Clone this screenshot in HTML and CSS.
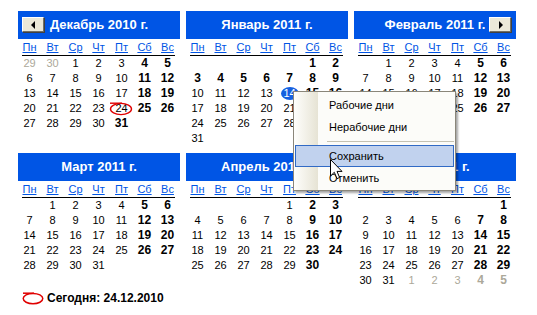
FILE: index.html
```html
<!DOCTYPE html>
<html lang="ru">
<head>
<meta charset="utf-8">
<title>Календарь</title>
<link rel="stylesheet" href="styles.css">
</head>
<body>
<div class="page">
  <div class="months">
    <section class="cal">
      <header class="cal-head"><span class="nav prev"><i></i></span><span class="title">Декабрь 2010 г.</span></header>
      <div class="dow"><span>Пн</span><span>Вт</span><span>Ср</span><span>Чт</span><span>Пт</span><span>Сб</span><span>Вс</span></div>
      <div class="rule"></div>
      <div class="days">
        <span class="g">29</span><span class="g">30</span><span>1</span><span>2</span><span>3</span><span class="b">4</span><span class="b">5</span>
        <span>6</span><span>7</span><span>8</span><span>9</span><span>10</span><span class="b">11</span><span class="b">12</span>
        <span>13</span><span>14</span><span>15</span><span>16</span><span>17</span><span class="b">18</span><span class="b">19</span>
        <span>20</span><span>21</span><span>22</span><span>23</span><span class="today">24<svg class="ring" width="24" height="15" viewBox="0 0 24 15"><path d="M1 2.2 H13" /><ellipse cx="12" cy="8" rx="10.5" ry="5.6"/></svg></span><span class="b">25</span><span class="b">26</span>
        <span>27</span><span>28</span><span>29</span><span>30</span><span class="b">31</span>
      </div>
    </section>
    <section class="cal">
      <header class="cal-head"><span class="title">Январь 2011 г.</span></header>
      <div class="dow"><span>Пн</span><span>Вт</span><span>Ср</span><span>Чт</span><span>Пт</span><span>Сб</span><span>Вс</span></div>
      <div class="rule"></div>
      <div class="days">
        <span></span><span></span><span></span><span></span><span></span><span class="b">1</span><span class="b">2</span>
        <span class="b">3</span><span class="b">4</span><span class="b">5</span><span class="b">6</span><span class="b">7</span><span class="b">8</span><span class="b">9</span>
        <span>10</span><span>11</span><span>12</span><span>13</span><span class="sel"><em>14</em></span><span class="b">15</span><span class="b">16</span>
        <span>17</span><span>18</span><span>19</span><span>20</span><span>21</span><span class="b">22</span><span class="b">23</span>
        <span>24</span><span>25</span><span>26</span><span>27</span><span>28</span><span class="b">29</span><span class="b">30</span>
        <span>31</span>
      </div>
    </section>
    <section class="cal">
      <header class="cal-head"><span class="title">Февраль 2011 г.</span><span class="nav next"><i></i></span></header>
      <div class="dow"><span>Пн</span><span>Вт</span><span>Ср</span><span>Чт</span><span>Пт</span><span>Сб</span><span>Вс</span></div>
      <div class="rule"></div>
      <div class="days">
        <span></span><span>1</span><span>2</span><span>3</span><span>4</span><span class="b">5</span><span class="b">6</span>
        <span>7</span><span>8</span><span>9</span><span>10</span><span>11</span><span class="b">12</span><span class="b">13</span>
        <span>14</span><span>15</span><span>16</span><span>17</span><span>18</span><span class="b">19</span><span class="b">20</span>
        <span>21</span><span>22</span><span class="b">23</span><span>24</span><span>25</span><span class="b">26</span><span class="b">27</span>
        <span>28</span>
      </div>
    </section>
    <section class="cal">
      <header class="cal-head"><span class="title">Март 2011 г.</span></header>
      <div class="dow"><span>Пн</span><span>Вт</span><span>Ср</span><span>Чт</span><span>Пт</span><span>Сб</span><span>Вс</span></div>
      <div class="rule"></div>
      <div class="days">
        <span></span><span>1</span><span>2</span><span>3</span><span>4</span><span class="b">5</span><span class="b">6</span>
        <span>7</span><span>8</span><span>9</span><span>10</span><span>11</span><span class="b">12</span><span class="b">13</span>
        <span>14</span><span>15</span><span>16</span><span>17</span><span>18</span><span class="b">19</span><span class="b">20</span>
        <span>21</span><span>22</span><span>23</span><span>24</span><span>25</span><span class="b">26</span><span class="b">27</span>
        <span>28</span><span>29</span><span>30</span><span>31</span>
      </div>
    </section>
    <section class="cal">
      <header class="cal-head"><span class="title">Апрель 2011 г.</span></header>
      <div class="dow"><span>Пн</span><span>Вт</span><span>Ср</span><span>Чт</span><span>Пт</span><span>Сб</span><span>Вс</span></div>
      <div class="rule"></div>
      <div class="days">
        <span></span><span></span><span></span><span></span><span>1</span><span class="b">2</span><span class="b">3</span>
        <span>4</span><span>5</span><span>6</span><span>7</span><span>8</span><span class="b">9</span><span class="b">10</span>
        <span>11</span><span>12</span><span>13</span><span>14</span><span>15</span><span class="b">16</span><span class="b">17</span>
        <span>18</span><span>19</span><span>20</span><span>21</span><span>22</span><span class="b">23</span><span class="b">24</span>
        <span>25</span><span>26</span><span>27</span><span>28</span><span>29</span><span class="b">30</span>
      </div>
    </section>
    <section class="cal">
      <header class="cal-head"><span class="title">Май 2011 г.</span></header>
      <div class="dow"><span>Пн</span><span>Вт</span><span>Ср</span><span>Чт</span><span>Пт</span><span>Сб</span><span>Вс</span></div>
      <div class="rule"></div>
      <div class="days">
        <span></span><span></span><span></span><span></span><span></span><span></span><span class="b">1</span>
        <span>2</span><span>3</span><span>4</span><span>5</span><span>6</span><span class="b">7</span><span class="b">8</span>
        <span>9</span><span>10</span><span>11</span><span>12</span><span>13</span><span class="b">14</span><span class="b">15</span>
        <span>16</span><span>17</span><span>18</span><span>19</span><span>20</span><span class="b">21</span><span class="b">22</span>
        <span>23</span><span>24</span><span>25</span><span>26</span><span>27</span><span class="b">28</span><span class="b">29</span>
        <span>30</span><span>31</span><span class="g">1</span><span class="g">2</span><span class="g">3</span><span class="g b">4</span><span class="g b">5</span>
      </div>
    </section>
  </div>
  <div class="today-line">
    <svg class="today-icon" width="22" height="14" viewBox="0 0 22 14"><path d="M1 2.2 H12" /><ellipse cx="11" cy="7.6" rx="9.8" ry="5.2"/></svg>
    <span>Сегодня: 24.12.2010</span>
  </div>

  <div class="menu">
    <div class="item">Рабочие дни</div>
    <div class="item">Нерабочие дни</div>
    <div class="sep"></div>
    <div class="item hot">Сохранить</div>
    <div class="item">Отменить</div>
  </div>
  <svg class="cursor" width="13" height="21" viewBox="0 0 13 21"><path d="M0.5 0.5 V17 L4.3 13.3 L7 19.6 L9.6 18.5 L7 12.4 H12 Z" fill="#fff" stroke="#000" stroke-width="1" stroke-linejoin="miter"/></svg>
</div>
</body>
</html>
```
FILE: styles.css
```css
html, body {
  margin: 0;
  padding: 0;
  background: #fff;
}

.page {
  position: relative;
  width: 537px;
  height: 315px;
  padding: 11px 0 0 18px;
  box-sizing: border-box;
  font-family: "Liberation Sans", Arial, sans-serif;
  color: #000;
}

.months {
  display: grid;
  grid-template-columns: repeat(3, 162px);
  column-gap: 6px;
  row-gap: 7px;
}

.cal {
  width: 162px;
}

.cal-head {
  position: relative;
  height: 28px;
  background: #0055e5;
  display: flex;
  align-items: center;
  justify-content: center;
}

.title {
  color: #fff;
  font-weight: bold;
  font-size: 13px;
  line-height: 28px;
}

.nav {
  position: absolute;
  top: 6px;
  width: 22px;
  height: 15px;
  box-sizing: border-box;
  background: #ece9d8;
  border-top: 1px solid #fff;
  border-left: 1px solid #fff;
  border-right: 1px solid #716f64;
  border-bottom: 1px solid #716f64;
  box-shadow: 1px 1px 0 #404040;
  display: flex;
  align-items: center;
  justify-content: center;
}

.nav.prev { left: 4px; }
.nav.next { right: 5px; }

.nav i {
  display: block;
  width: 0;
  height: 0;
  border-top: 4px solid transparent;
  border-bottom: 4px solid transparent;
}

.prev i { border-right: 4px solid #000; margin-left: -1px; }
.next i { border-left: 4px solid #000; margin-left: 1px; }

.dow {
  display: grid;
  grid-template-columns: repeat(7, 23px);
  height: 16px;
  line-height: 17px;
  font-size: 11px;
  color: #0055e5;
  text-align: center;
}

.dow span {
  text-decoration: underline;
  text-underline-offset: 1px;
}

.rule {
  height: 1px;
  background: #000;
  margin: 0 5px 0 4px;
}

.days {
  display: grid;
  grid-template-columns: repeat(7, 23px);
  grid-template-rows: repeat(6, 15px);
  font-size: 11px;
  line-height: 15px;
  text-align: center;
}

.days span {
  position: relative;
}

.days .b {
  font-weight: bold;
  font-size: 12px;
}

.days .g {
  color: #aca899;
}

.days .sel em {
  display: inline-block;
  font-style: normal;
  width: 18px;
  height: 13px;
  line-height: 13px;
  margin-top: 1px;
  border-radius: 50%;
  background: #1560e0;
  color: #fff;
}

.ring {
  position: absolute;
  left: -1px;
  top: 0;
  fill: none;
  stroke: #e00000;
  stroke-width: 1.4;
}

.today-line {
  display: flex;
  align-items: center;
  gap: 3px;
  height: 16px;
  margin-top: 2px;
  padding-left: 4px;
  font-size: 12px;
  font-weight: bold;
}

.today-icon {
  fill: none;
  stroke: #e00000;
  stroke-width: 1.5;
}

.menu {
  position: absolute;
  left: 293px;
  top: 91px;
  width: 163px;
  box-sizing: border-box;
  padding: 2px 0 1px;
  border: 1px solid #8a867a;
  background: linear-gradient(to right, #fefefc 0, #e6e3d4 24px, #fcfcf9 24px);
  box-shadow: 2px 2px 2px rgba(0, 0, 0, 0.35);
  font-size: 11px;
}

.item {
  height: 22px;
  line-height: 20px;
  margin: 0 1px;
  padding-left: 33px;
  border: 1px solid transparent;
  box-sizing: border-box;
}

.item.hot {
  border-color: #316ac5;
  background: #c1d2ee;
}

.sep {
  height: 7px;
  margin-left: 33px;
  margin-right: 1px;
  background: linear-gradient(#c5c2b2, #c5c2b2) center / 100% 1px no-repeat;
}

.cursor {
  position: absolute;
  left: 330px;
  top: 159px;
}
```
